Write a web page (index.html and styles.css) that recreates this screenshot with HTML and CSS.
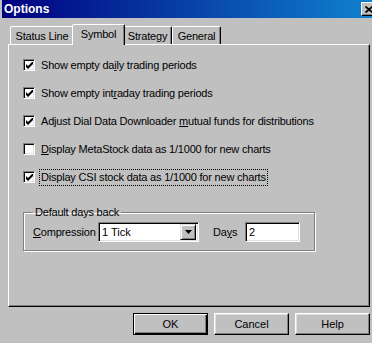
FILE: index.html
```html
<!DOCTYPE html>
<html lang="en">
<head>
  <meta charset="UTF-8" />
  <title>Options</title>
  <link rel="stylesheet" href="styles.css">
</head>
<body>
  <div class="dialog">
    <div class="titlebar">
      <span class="title">Options</span>
      <span class="close">
        <svg width="8" height="7" viewBox="0 0 8 7"><path d="M0.5 0.5 L7.5 6.5 M7.5 0.5 L0.5 6.5" stroke="#000" stroke-width="1.8"/></svg>
      </span>
    </div>

    <div class="content">
      <div class="tabs">
        <div class="tab tab-status">Status Line</div>
        <div class="tab tab-symbol active">Symbol</div>
        <div class="tab tab-strategy">Strategy</div>
        <div class="tab tab-general">General</div>
      </div>

      <div class="panel">
        <div class="row">
          <span class="check"><svg width="7" height="7" viewBox="0 0 7 7"><polygon points="0,2 2,4 7,-1 7,2 2,7 0,5" fill="#000"/></svg></span>
          <span class="label">Show empty da<u>i</u>ly trading periods</span>
        </div>
        <div class="row">
          <span class="check"><svg width="7" height="7" viewBox="0 0 7 7"><polygon points="0,2 2,4 7,-1 7,2 2,7 0,5" fill="#000"/></svg></span>
          <span class="label">Show empty int<u>r</u>aday trading periods</span>
        </div>
        <div class="row">
          <span class="check"><svg width="7" height="7" viewBox="0 0 7 7"><polygon points="0,2 2,4 7,-1 7,2 2,7 0,5" fill="#000"/></svg></span>
          <span class="label">Adjust Dial Data Downloader <u>m</u>utual funds for distributions</span>
        </div>
        <div class="row">
          <span class="check"></span>
          <span class="label"><u>D</u>isplay MetaStock data as 1/1000 for new charts</span>
        </div>
        <div class="row">
          <span class="check"><svg width="7" height="7" viewBox="0 0 7 7"><polygon points="0,2 2,4 7,-1 7,2 2,7 0,5" fill="#000"/></svg></span>
          <span class="label focus">Display CSI stock data as 1/1000 for new charts</span>
        </div>

        <fieldset class="group">
          <legend>Default days back</legend>
          <div class="group-row">
            <span class="field-label"><u>C</u>ompression</span>
            <div class="combo">
              <span class="combo-text">1 Tick</span>
              <span class="combo-btn">
                <svg width="7" height="4" viewBox="0 0 7 4"><path d="M0 0 H7 L3.5 4 Z" fill="#000"/></svg>
              </span>
            </div>
            <span class="field-label days">Da<u>y</u>s</span>
            <div class="textbox">2</div>
          </div>
        </fieldset>
      </div>

      <div class="buttons">
        <div class="btn default"><span>OK</span></div>
        <div class="btn"><span>Cancel</span></div>
        <div class="btn"><span>Help</span></div>
      </div>
    </div>
  </div>
</body>
</html>
```

FILE: styles.css
```css
body {
  margin: 0;
  background: #c0c0c0;
  overflow: hidden;
  font-family: "Liberation Sans", Arial, sans-serif;
  font-size: 11px;
  color: #000;
}
.dialog {
  width: 380px;
  padding: 0 0 0 2px;
  box-sizing: border-box;
}
.titlebar {
  height: 18px;
  background: linear-gradient(90deg, #000080, #1084d0);
  display: flex;
  align-items: center;
  justify-content: space-between;
  padding: 0 3px 0 2px;
}
.title {
  color: #fff;
  font-weight: bold;
  font-size: 12px;
}
.close {
  width: 16px;
  height: 14px;
  box-sizing: border-box;
  background: #c0c0c0;
  border: 1px solid;
  border-color: #fff #000 #000 #fff;
  box-shadow: inset -1px -1px #808080;
  display: flex;
  align-items: center;
  justify-content: center;
}
.content {
  padding: 6px 10px 0 6px;
}
.tabs {
  display: flex;
  align-items: flex-end;
  height: 20px;
  padding-left: 2px;
}
.tab {
  height: 18px;
  box-sizing: border-box;
  border: 1px solid;
  border-bottom: none;
  border-color: #fff #000 transparent #fff;
  border-radius: 2px 2px 0 0;
  box-shadow: inset -1px 0 #808080;
  display: flex;
  align-items: center;
  justify-content: center;
  letter-spacing: -0.2px;
}
.tab-status { width: 64px; }
.tab-symbol { width: 49px; }
.tab-strategy { width: 49px; }
.tab-general { width: 49px; }
.tab.active {
  height: 21px;
  margin: 0 -2px -1px;
  width: 53px;
  padding-bottom: 3px;
  background: #c0c0c0;
  position: relative;
  z-index: 1;
}
.panel {
  height: 263px;
  box-sizing: border-box;
  border: 1px solid;
  border-color: #fff #000 #000 #fff;
  box-shadow: inset -1px -1px #808080;
  padding: 6px 0 0 14px;
}
.row {
  height: 28px;
  display: flex;
  align-items: center;
}
.check {
  width: 12px;
  height: 12px;
  box-sizing: border-box;
  background: #fff;
  border: 1px solid;
  border-color: #808080 #fff #fff #808080;
  box-shadow: inset 1px 1px #000, inset -1px -1px #dfdfdf;
  display: flex;
  align-items: center;
  justify-content: center;
}
.label {
  margin-left: 6px;
  letter-spacing: -0.2px;
}
.label.focus {
  margin-left: 5px;
  padding: 1px 1px 2px;
  outline: 1px dotted #000;
}
.group {
  margin: 15px 0 0 0;
  width: 292px;
  height: 45px;
  box-sizing: border-box;
  border: 1px solid #808080;
  box-shadow: inset 1px 1px #fff, 1px 1px #fff;
  padding: 0 0 0 9px;
}
.group legend {
  padding: 0 2px;
  margin-left: 0;
  letter-spacing: -0.2px;
}
.group-row {
  display: flex;
  align-items: center;
  margin-top: 4px;
}
.field-label {
  width: 65px;
  letter-spacing: -0.2px;
}
.field-label.days {
  width: 32px;
  margin-left: 14px;
}
.combo, .textbox {
  height: 20px;
  box-sizing: border-box;
  background: #fff;
  border: 1px solid;
  border-color: #808080 #fff #fff #808080;
  box-shadow: inset 1px 1px #000, inset -1px -1px #dfdfdf;
  display: flex;
  align-items: center;
}
.combo {
  width: 101px;
  justify-content: space-between;
  padding: 0 2px 0 3px;
}
.combo-btn {
  width: 16px;
  height: 16px;
  box-sizing: border-box;
  background: #c0c0c0;
  border: 1px solid;
  border-color: #dfdfdf #000 #000 #dfdfdf;
  box-shadow: inset 1px 1px #fff, inset -1px -1px #808080;
  display: flex;
  align-items: center;
  justify-content: center;
}
.textbox {
  width: 55px;
  padding-left: 3px;
}
.buttons {
  display: flex;
  justify-content: flex-end;
  gap: 6px;
  margin-top: 6px;
}
.btn {
  width: 75px;
  height: 22px;
  box-sizing: border-box;
  border: 1px solid;
  border-color: #fff #000 #000 #fff;
  box-shadow: inset -1px -1px #808080, inset 1px 1px #dfdfdf;
  display: flex;
  align-items: center;
  justify-content: center;
}
.btn.default {
  border: 1px solid #000;
  box-shadow: inset 1px 1px #fff, inset -1px -1px #000, inset -2px -2px #808080;
}
```
